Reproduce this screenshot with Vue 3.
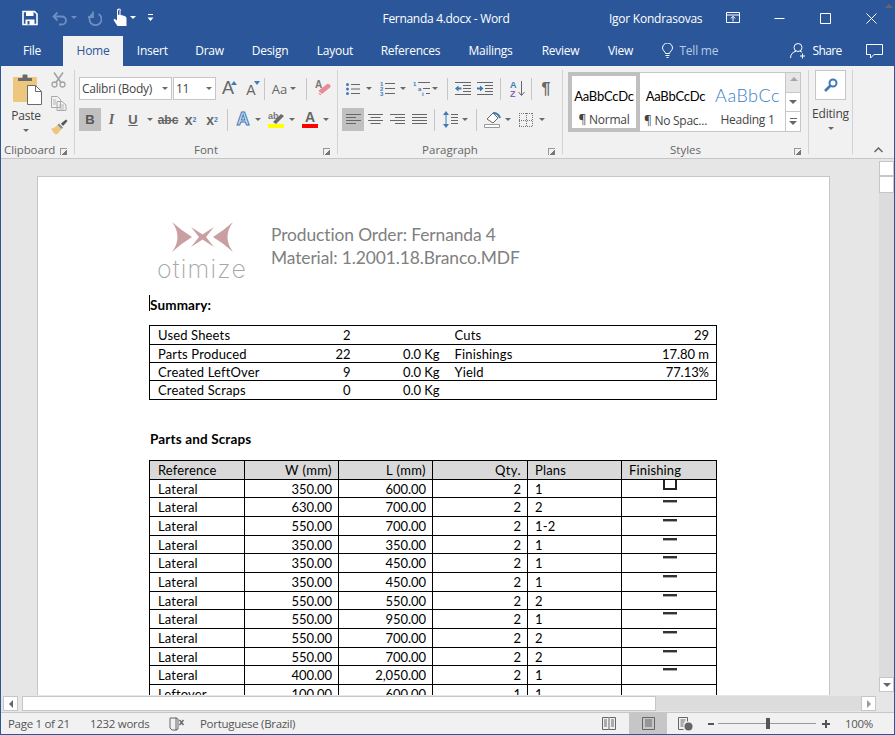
<script setup>
const tabs = [
  { t: 'File', w: 62 }, { t: 'Home', w: 60, active: true }, { t: 'Insert', w: 58.5 }, { t: 'Draw', w: 56 },
  { t: 'Design', w: 65 }, { t: 'Layout', w: 65 }, { t: 'References', w: 86 }, { t: 'Mailings', w: 74 },
  { t: 'Review', w: 66 }, { t: 'View', w: 54 }
]
const summary = [
  { a: 'Used Sheets', b: '2', c: '', d: 'Cuts', e: '29', h: 19 },
  { a: 'Parts Produced', b: '22', c: '0.0 Kg', d: 'Finishings', e: '17.80 m', h: 18 },
  { a: 'Created LeftOver', b: '9', c: '0.0 Kg', d: 'Yield', e: '77.13%', h: 18 },
  { a: 'Created Scraps', b: '0', c: '0.0 Kg', d: '', e: '', h: 19 }
]
const parts = [
  ['Lateral', '350.00', '600.00', '2', '1', 18, 'u'],
  ['Lateral', '630.00', '700.00', '2', '2', 19, 'l'],
  ['Lateral', '550.00', '700.00', '2', '1-2', 19, 'l'],
  ['Lateral', '350.00', '350.00', '2', '1', 18, 'l'],
  ['Lateral', '350.00', '450.00', '2', '1', 19, 'l'],
  ['Lateral', '350.00', '450.00', '2', '1', 19, 'l'],
  ['Lateral', '550.00', '550.00', '2', '2', 18, 'l'],
  ['Lateral', '550.00', '950.00', '2', '1', 19, 'l'],
  ['Lateral', '550.00', '700.00', '2', '2', 19, 'l'],
  ['Lateral', '550.00', '700.00', '2', '2', 18, 'l'],
  ['Lateral', '400.00', '2,050.00', '2', '1', 19, 'l'],
  ['Leftover', '100.00', '600.00', '1', '1', 19, '']
]
</script>

<template>
  <div class="win">
    <header class="titlebar">
      <div class="qat">
        <svg class="q-save" width="16" height="16" viewBox="0 0 16 16"><path d="M1 1.5h11.5l2.5 2.500v10.500h-14z" fill="none" stroke="#fff" stroke-width="1.600"/><path d="M4 1h7.500v5h-7.500zM3.500 9.500h9v5.500h-9z" fill="#fff"/><rect x="5.500" y="11" width="2" height="3.500" fill="#2b579a"/></svg>
        <svg class="q-undo" width="16" height="16" viewBox="0 0 16 16"><path d="M2 6.500h8a4 4 0 0 1 0 8h-3M5.500 2.500l-4 4 4 4" fill="none" stroke="#6d8ebf" stroke-width="1.800"/></svg>
        <i class="caret w11 dim"></i>
        <svg class="q-redo" width="16" height="16" viewBox="0 0 16 16"><path d="M5 3.500a6 6 0 1 0 6 0M5.500 1v5.500h-5" fill="none" stroke="#6d8ebf" stroke-width="1.800" transform="translate(1.500 .5)"/></svg>
        <svg class="q-touch" width="14" height="18" viewBox="0 0 14 18"><path d="M4 7V2.500a2 2 0 0 1 4 0V7l3.500 1c1.500.5 2 1.200 2 2.500V18H4.500L.5 12l1-1.200L4 12.500z" fill="#fff"/><path d="M5.500 6.800V2.800a.7.700 0 0 1 1.500 0v4M2 5.500A3.500 3.500 0 0 1 2 1.800" fill="none" stroke="#2b579a" stroke-width="1"/></svg>
        <i class="caret w11 white"></i>
        <svg class="q-cust" width="7" height="8" viewBox="0 0 7 8"><path d="M1 .5h5" stroke="#fff" stroke-width="1"/><path d="M.5 3.500h6L3.500 7z" fill="#fff"/></svg>
      </div>
      <div class="doctitle">Fernanda 4.docx - Word</div>
      <div class="user">Igor Kondrasovas</div>
      <svg class="w-opt" width="14" height="12" viewBox="0 0 14 12"><path d="M.5.500h13v10h-13zM.5 3h13M7 9.500v-5M4.800 6.500L7 4.300l2.200 2.200" fill="none" stroke="#fff"/></svg>
      <svg class="w-min" width="11" height="11" viewBox="0 0 11 11"><path d="M.5 5.500h10" stroke="#fff"/></svg>
      <svg class="w-max" width="11" height="11" viewBox="0 0 11 11"><path d="M.5.500h10v10H.5z" fill="none" stroke="#fff"/></svg>
      <svg class="w-close" width="11" height="11" viewBox="0 0 11 11"><path d="M.5.500l10 10M10.500.500l-10 10" stroke="#fff"/></svg>
    </header>

    <nav class="tabs">
      <span v-for="tab in tabs" :key="tab.t" class="tab" :class="{ on: tab.active }" :style="{ width: tab.w + 'px' }">{{ tab.t }}</span>
      <svg class="bulb" width="11" height="15" viewBox="0 0 11 15"><path d="M3.500 10.500C3.300 8.500.5 7.500.5 5a5 5 0 0 1 10 0c0 2.500-2.800 3.500-3 5.500zM3.500 12.500h4M4.500 14.500h2" fill="none" stroke="#fff"/></svg>
      <span class="tell">Tell me</span>
      <svg class="person" width="17" height="17" viewBox="0 0 17 17"><circle cx="8" cy="5.500" r="4" fill="none" stroke="#fff"/><path d="M.5 16c0-4 2.500-6 5.500-6.800M10 9.200c.8.200 1.500.5 2 1M12.500 11.500v5M10 14h5" fill="none" stroke="#fff"/></svg>
      <span class="share">Share</span>
      <svg class="comment" width="17" height="15" viewBox="0 0 17 15"><path d="M.5.500h16v10H8l-3.500 3.500v-3.500H.5z" fill="none" stroke="#fff"/></svg>
    </nav>

    <section class="ribbon">
      <div class="group g-clip">
        <div class="clip-body">
          <div class="paste">
            <svg width="29" height="31" viewBox="0 0 29 31"><rect x="0" y="3" width="24" height="25" rx="1" fill="#eec77f"/><path d="M5 7V4h4.500V1.500a1 1 0 0 1 1-1h3a1 1 0 0 1 1 1V4H19v3z" fill="#6a6a6a"/><path d="M14.500 11.500h8l6 6v13h-14z" fill="#fff" stroke="#6a6a6a"/><path d="M22.500 11.500v6h6" fill="none" stroke="#6a6a6a"/></svg>
            <span class="paste-l">Paste</span>
            <i class="caret w11"></i>
          </div>
          <div class="clip-small">
            <svg width="15" height="16" viewBox="0 0 15 16"><path d="M3 .5l7 10M12 .5l-7 10" stroke="#a3a3a3" stroke-width="1.600" fill="none"/><circle cx="3.500" cy="12.500" r="2.500" fill="none" stroke="#a3a3a3" stroke-width="1.300"/><circle cx="11.500" cy="12.500" r="2.500" fill="none" stroke="#a3a3a3" stroke-width="1.300"/></svg>
            <svg width="16" height="15" viewBox="0 0 16 15"><path d="M.5.500h6l3 3v8H.5z M6 5.500h5l4 3.500v5.500H6z" fill="#f1f1f1" stroke="#a9a9a9"/><path d="M2 4h3M2 6h3M2 8h3M8 9h5M8 11h5M8 13h5" stroke="#b8b8b8"/></svg>
            <svg width="17" height="16" viewBox="0 0 17 16"><path d="M0 9.500c3 0 5-2 6.500-3.500l4 4c-2 3-3.500 4.500-5 5.500C4 15.500 1.500 12.500 0 9.500z" fill="#eec77f"/><path d="M6.500 6l4 4 1.500-1.500-4-4z" fill="#8a8a8a"/><path d="M10 4.500L15 .5l1.500 1.500-4.500 5z" fill="#555"/></svg>
          </div>
        </div>
        <div class="glabel clip-l">Clipboard</div>
        <i class="launch"></i>
      </div>

      <div class="group g-font">
        <div class="row">
          <div class="combo cb-font"><span>Calibri (Body)</span><i class="caret w12"></i></div>
          <div class="combo cb-size"><span>11</span><i class="caret w12"></i></div>
          <span class="btn w22 ml1 glyph big">A<svg class="up" width="6" height="4" viewBox="0 0 6 4"><path d="M0 4l3-4 3 4z" fill="#3f7ab8"/></svg></span>
          <span class="btn w22 ml1 glyph mid">A<svg class="up" width="6" height="4" viewBox="0 0 6 4"><path d="M0 0l3 4 3-4z" fill="#3f7ab8"/></svg></span>
          <i class="sep ml2"></i>
          <span class="btn w21 ml4 glyph aa">Aa</span>
          <i class="caret w6"></i>
          <i class="sep ml10"></i>
          <span class="btn w22 ml5"><svg width="16" height="17" viewBox="0 0 16 17"><path d="M5 15.500L14.500 8c1.500-1.500 1.500-2 0-3.500-1-1-2-1-3 0L3 11z" fill="#ec8a94"/><path d="M3 11l5 4.500" stroke="#fff"/><text x="0" y="8" class="svgt">A</text></svg></span>
        </div>
        <div class="row r2">
          <span class="btn w22 on-b b">B</span>
          <span class="btn w21 glyph it">I</span>
          <span class="btn w22 glyph un">U</span>
          <i class="caret w12"></i>
          <span class="btn w24 glyph abc">abc</span>
          <span class="btn w21 glyph xs">x<sub>2</sub></span>
          <span class="btn w22 glyph xs">x<sup>2</sup></span>
          <i class="sep ml4"></i>
          <span class="btn w22 ml4 glyph te">A</span>
          <i class="caret w7"></i>
          <span class="btn w22 ml4"><svg width="17" height="19" viewBox="0 0 17 19"><text x="0" y="9" class="svgt small">ab</text><path d="M5 12L13 4l3 2-8 8z" fill="#6a6a6a"/><rect x="0" y="14" width="16" height="4" fill="#ffff00"/></svg></span>
          <i class="caret w10"></i>
          <span class="btn w22 ml2"><svg width="17" height="19" viewBox="0 0 17 19"><text x="3" y="12" class="svgt fc">A</text><rect x="0" y="14" width="16" height="4" fill="#f00"/></svg></span>
          <i class="caret w10"></i>
        </div>
        <div class="glabel">Font</div>
        <i class="launch"></i>
      </div>

      <div class="group g-para">
        <div class="row">
          <span class="btn w23 ml3"><svg width="14" height="14" viewBox="0 0 14 14"><circle cx="1.500" cy="2.500" r="1.500" fill="#3f7ab8"/><circle cx="1.500" cy="7" r="1.500" fill="#3f7ab8"/><circle cx="1.500" cy="11.500" r="1.500" fill="#3f7ab8"/><path d="M5 2.500h9M5 7h9M5 11.500h9" stroke="#666"/></svg></span>
          <i class="caret w10"></i>
          <span class="btn w22 ml2"><svg width="15" height="15" viewBox="0 0 15 15"><text x="0" y="5" class="svgt num">1</text><text x="0" y="10" class="svgt num">2</text><text x="0" y="15" class="svgt num">3</text><path d="M5 2.500h10M5 7.500h10M5 12.500h10" stroke="#666"/></svg></span>
          <i class="caret w10"></i>
          <span class="btn w20 ml3"><svg width="17" height="15" viewBox="0 0 17 15"><text x="0" y="5" class="svgt num">1</text><text x="5" y="10" class="svgt num">a</text><text x="9" y="15" class="svgt num">i</text><path d="M5 1.500h12M10 7.500h7M13 12.500h4" stroke="#666"/></svg></span>
          <i class="caret w8"></i>
          <i class="sep ml8"></i>
          <span class="btn w22 ml4"><svg width="16" height="13" viewBox="0 0 16 13"><path d="M0 .5h16M8 3.500h8M8 6.500h8M8 9.500h8M0 12.500h16" stroke="#666"/><path d="M6.500 5.500v2H3.500v2L0 6.500l3.500-3v2z" fill="#3f7ab8"/></svg></span>
          <span class="btn w22"><svg width="16" height="13" viewBox="0 0 16 13"><path d="M0 .5h16M8 3.500h8M8 6.500h8M8 9.500h8M0 12.500h16" stroke="#666"/><path d="M0 5.500v2h3v2l3.500-3-3.500-3v2z" fill="#3f7ab8"/></svg></span>
          <i class="sep ml4"></i>
          <span class="btn w22 ml5"><svg width="15" height="18" viewBox="0 0 15 18"><text x="0" y="8" class="svgt az b1">A</text><text x="0" y="17" class="svgt az p1">Z</text><path d="M11.500 1v14M8.500 12l3 3.500 3-3.500" fill="none" stroke="#666"/></svg></span>
          <i class="sep ml3"></i>
          <span class="btn w22 ml3 glyph pil">¶</span>
        </div>
        <div class="row r2">
          <span class="btn w22 ml4 on-b"><svg width="15" height="11" viewBox="0 0 15 11"><path d="M0 .5h15M0 3.500h10M0 6.500h15M0 9.500h10" stroke="#666"/></svg></span>
          <span class="btn w22"><svg width="15" height="11" viewBox="0 0 15 11"><path d="M0 .5h15M2.500 3.500h10M0 6.500h15M2.500 9.500h10" stroke="#666"/></svg></span>
          <span class="btn w22"><svg width="15" height="11" viewBox="0 0 15 11"><path d="M0 .5h15M5 3.500h10M0 6.500h15M5 9.500h10" stroke="#666"/></svg></span>
          <span class="btn w22"><svg width="15" height="11" viewBox="0 0 15 11"><path d="M0 .5h15M0 3.500h15M0 6.500h15M0 9.500h15" stroke="#666"/></svg></span>
          <i class="sep ml4"></i>
          <span class="btn w22 ml4"><svg width="15" height="17" viewBox="0 0 15 17"><path d="M3 2v13" stroke="#3f7ab8"/><path d="M0 4l3-4 3 4zM0 13l3 4 3-4z" fill="#3f7ab8"/><path d="M8 3.500h7M8 6.500h7M8 9.500h7M8 12.500h7" stroke="#666"/></svg></span>
          <i class="caret w7"></i>
          <i class="sep ml8"></i>
          <span class="btn w22 ml4"><svg width="17" height="17" viewBox="0 0 17 17"><path d="M3 8l6-6 5 5-5 5z" fill="#fff" stroke="#666"/><path d="M9 2c3 0 6 1.500 7 5" fill="none" stroke="#3f7ab8" stroke-width="2"/><path d="M.5 13.500h15v3H.5z" fill="#fff" stroke="#999"/></svg></span>
          <i class="caret w10"></i>
          <span class="btn w22 ml2"><svg width="14" height="14" viewBox="0 0 14 14"><path d="M.5 0v14M13.500 0v14M0 .5h14M0 13.500h14M7.500 0v14M0 7.500h14" fill="none" stroke="#777" stroke-dasharray="1 1"/></svg></span>
          <i class="caret w10"></i>
        </div>
        <div class="glabel">Paragraph</div>
        <i class="launch"></i>
      </div>

      <div class="group g-styles">
        <div class="gallery">
          <div class="style sel"><div class="sample">AaBbCcDc</div><div class="sname">¶ Normal</div></div>
          <div class="style sp"><div class="sample">AaBbCcDc</div><div class="sname">¶ No Spac...</div></div>
          <div class="style hd"><div class="sample">AaBbCc</div><div class="sname">Heading 1</div></div>
          <div class="gscroll">
            <span class="gb dis"><i class="tri up"></i></span>
            <span class="gb"><i class="tri"></i></span>
            <span class="gb more"><i class="barline"></i><i class="tri"></i></span>
          </div>
        </div>
        <div class="glabel">Styles</div>
        <i class="launch"></i>
      </div>

      <div class="group g-edit">
        <span class="ebtn"><svg width="14" height="14" viewBox="0 0 14 14"><circle cx="9" cy="5" r="3.500" fill="none" stroke="#3f7ab8" stroke-width="2"/><path d="M6.500 7.500L1 13" stroke="#3f7ab8" stroke-width="2.600"/></svg></span>
        <span class="elabel">Editing</span>
        <i class="caret w11"></i>
      </div>

      <svg class="collapse" width="9" height="6" viewBox="0 0 9 6"><path d="M.5 5L4.500 1l4 4" fill="none" stroke="#666" stroke-width="1.500"/></svg>
    </section>

    <main class="docarea">
      <div class="canvas">
        <article class="page">
          <div class="head">
            <div class="logo">
              <svg width="61" height="32" viewBox="0 0 61 32"><path d="M0 1Q10 10 20 16Q10 22 0 31Q11 16 0 1z" fill="#c99fa2"/><path d="M19 6L30.500 13.500L42 6L34 16L42 26L30.500 18.500L19 26L27 16z" fill="#c99fa2"/><path d="M61 1Q51 10 41 16Q51 22 61 31Q50 16 61 1z" fill="#c99fa2"/></svg>
              <span class="otimize">otimize</span>
            </div>
            <div class="heading"><div>Production Order: Fernanda 4</div><div>Material: 1.2001.18.Branco.MDF</div></div>
          </div>
          <div class="summary-t"><i class="cursor"></i>Summary:</div>
          <table class="grid sum">
            <colgroup><col class="c1"><col class="c2"><col class="c3"><col class="c4"><col class="c5"></colgroup>
            <tr v-for="r in summary" :key="r.a" :style="{ height: r.h + 'px' }">
              <td class="l">{{ r.a }}</td><td class="r">{{ r.b }}</td><td class="r">{{ r.c }}</td><td class="l c4t">{{ r.d }}</td><td class="r">{{ r.e }}</td>
            </tr>
          </table>
          <div class="parts-t">Parts and Scraps</div>
          <table class="grid parts">
            <colgroup><col class="p1"><col class="p2"><col class="p2"><col class="p3"><col class="p2"><col class="p3"></colgroup>
            <tr class="th"><td class="l">Reference</td><td class="r">W (mm)</td><td class="r">L (mm)</td><td class="r">Qty.</td><td class="l pl7">Plans</td><td class="l pl7">Finishing</td></tr>
            <tr v-for="(r, i) in parts" :key="i" :style="{ height: r[5] + 'px' }">
              <td class="l">{{ r[0] }}</td><td class="r">{{ r[1] }}</td><td class="r">{{ r[2] }}</td><td class="r">{{ r[3] }}</td><td class="l pl7">{{ r[4] }}</td>
              <td class="fin"><i v-if="r[6] === 'u'" class="chk-u"></i><i v-else-if="r[6] === 'l'" class="chk-l"></i></td>
            </tr>
          </table>
        </article>
      </div>
      <aside class="vscroll">
        <span class="sb"><i class="tri up"></i></span>
        <span class="vthumb"></span>
        <span class="vfill"></span>
        <span class="sb"><i class="tri"></i></span>
      </aside>
    </main>

    <div class="hscroll">
      <span class="sb hb"><i class="tri left"></i></span>
      <div class="htrack"><span class="hthumb"></span></div>
      <span class="sb hb"><i class="tri right"></i></span>
    </div>

    <footer class="status">
      <span class="s-page">Page 1 of 21</span>
      <span class="s-words">1232 words</span>
      <svg class="s-proof" width="16" height="14" viewBox="0 0 16 14"><path d="M7 1H1v10l2 2h4M7 .5v13M7 1l2 1v10l-2 1" fill="none" stroke="#666"/><path d="M10.500 3l4 5M14.500 3l-4 5" stroke="#666" stroke-width="1.400"/></svg>
      <span class="s-lang">Portuguese (Brazil)</span>
      <svg class="v-read" width="14" height="14" viewBox="0 0 14 14"><path d="M.5.500h6l.5.5.5-.5h6v12h-6l-.5.5-.5-.5h-6zM7 1v12M2 3h3M2 5h3M2 7h3M2 9h3M9 3h3M9 5h3M9 7h3M9 9h3" fill="none" stroke="#666"/></svg>
      <span class="v-print"><svg width="13" height="13" viewBox="0 0 13 13"><path d="M.5.500h12v12H.5zM3 3h7M3 5h7M3 7h7M3 9h7" fill="none" stroke="#666"/></svg></span>
      <svg class="v-web" width="15" height="14" viewBox="0 0 15 14"><path d="M.5.500h9v4M.5.500v12h5M2.500 3h5M2.500 5h4M2.500 7h3M2.500 9h3" fill="none" stroke="#666"/><circle cx="10.500" cy="9.500" r="4" fill="#666"/></svg>
      <i class="z-minus"></i>
      <div class="slider"><i class="z-thumb"></i></div>
      <i class="z-plus"></i>
      <span class="s-zoom">100%</span>
    </footer>
  </div>
</template>

<style>
html, body { margin: 0; padding: 0; background: #f1f1f1; }
</style>

<style scoped>
.win { width: 895px; height: 735px; box-sizing: border-box; border: 1px solid #2b579a; border-top: 0; display: flex; flex-direction: column; overflow: hidden; font-family: "Open Sans", "Noto Sans", sans-serif; font-size: 12px; color: #444; background: #e6e6e6; }
i { display: block; font-style: normal; }
.titlebar { height: 36px; flex: none; background: #2b579a; color: #fff; display: flex; align-items: center; }
.qat { width: 345px; display: flex; align-items: center; flex: none; }
.q-save { margin-left: 21px; }
.q-undo { margin-left: 14px; }
.q-redo { margin-left: 7px; }
.q-touch { margin-left: 11px; margin-top: -2px; }
.q-cust { margin-left: 9px; }
.doctitle { width: 200px; text-align: center; flex: none; letter-spacing: -.3px; }
.user { margin-left: 63px; letter-spacing: -.25px; width: 91px; white-space: nowrap; }
.w-opt { margin-left: 26px; }
.w-min { margin-left: 34px; }
.w-max { margin-left: 35px; }
.w-close { margin-left: 35px; }
.caret { position: relative; height: 10px; flex: none; }
.caret::after { content: ""; position: absolute; left: 50%; top: 50%; margin: -2px 0 0 -3px; border-style: solid; border-width: 3px 3px 0; border-color: #6a6a6a transparent transparent; }
.caret.dim::after { border-top-color: #6d8ebf; }
.caret.white::after { border-top-color: #fff; }
.w6 { width: 6px; } .w7 { width: 7px; } .w8 { width: 8px; } .w10 { width: 10px; } .w11 { width: 11px; } .w12 { width: 12px; }
.w20 { width: 20px; } .w21 { width: 21px; } .w22 { width: 22px; } .w23 { width: 23px; } .w24 { width: 24px; }
.ml1 { margin-left: 1px; } .ml2 { margin-left: 2px; } .ml3 { margin-left: 3px; } .ml4 { margin-left: 4px; } .ml5 { margin-left: 5px; } .ml8 { margin-left: 8px; } .ml10 { margin-left: 10px; }

.tabs { height: 30px; flex: none; background: #2b579a; display: flex; color: #fff; letter-spacing: -.25px; align-items: stretch; }
.tab { display: flex; align-items: center; justify-content: center; flex: none; height: 30px; padding-bottom: 1px; box-sizing: border-box; }
.tab.on { background: #f1f1f1; color: #2b579a; }
.bulb { margin: 7px 0 0 14px; flex: none; }
.tell { margin: 0 0 0 7px; color: #b9cbe5; line-height: 30px; width: 39px; white-space: nowrap; }
.person { margin: 6px 0 0 71px; flex: none; }
.share { margin-left: 6px; line-height: 30px; width: 30px; letter-spacing: -.6px; }
.comment { margin: 8px 0 0 23px; flex: none; }

.ribbon { height: 92px; flex: none; background: #f1f1f1; border-bottom: 1px solid #c6c6c6; box-sizing: content-box; display: flex; position: relative; }
.group { position: relative; height: 84px; margin-top: 4px; border-right: 1px solid #d2d2d2; box-sizing: content-box; flex: none; display: flex; flex-direction: column; }
.g-clip { width: 73px; } .g-font { width: 262px; } .g-para { width: 224px; } .g-styles { width: 245px; } .g-edit { width: 43px; align-items: center; }
.g-font .row { margin-left: 4px; }
.row { display: flex; align-items: center; height: 23px; margin-top: 7px; }
.row.r2 { margin-top: 8px; }
.glabel { position: absolute; left: 0; right: 0; bottom: -4px; height: 16px; line-height: 16px; text-align: center; font-size: 11.5px; color: #666; }
.clip-l { text-align: left; padding-left: 3px; letter-spacing: -.1px; }
.launch { position: absolute; right: 7px; bottom: -1px; width: 7px; height: 7px; border-left: 1px solid #999; border-top: 1px solid #999; box-sizing: border-box; background: linear-gradient(135deg, transparent 55%, #777 55%); }
.clip-body { display: flex; }
.paste { width: 50px; display: flex; flex-direction: column; align-items: center; padding-top: 4px; box-sizing: border-box; }
.paste svg { margin-left: 3px; }
.paste-l { margin-top: 3px; line-height: 16px; color: #444; letter-spacing: -.2px; }
.paste .caret { margin-top: 2px; }
.clip-small { display: flex; flex-direction: column; gap: 8px; align-items: flex-start; padding-top: 2px; }
.combo { height: 23px; box-sizing: border-box; border: 1px solid #c6c6c6; background: #fff; display: flex; align-items: center; justify-content: space-between; flex: none; padding-left: 2px; font-size: 12px; letter-spacing: -.3px; }
.cb-font { width: 93px; } .cb-size { width: 43px; margin-left: 1px; }
.btn { height: 23px; flex: none; display: flex; align-items: center; justify-content: center; position: relative; }
.on-b { background: #c0c0c0; }
.b { font-weight: 700; font-size: 13px; color: #555; font-family: "Liberation Sans", sans-serif; }
.glyph { font-family: "Liberation Sans", sans-serif; color: #666; }
.big { font-size: 18px; } .mid { font-size: 14px; padding-top: 2px; box-sizing: border-box; }
.up { position: absolute; right: 2px; top: 4px; }
.aa { font-size: 13px; font-family: "Open Sans", sans-serif; }
.it { font-style: italic; font-family: "Liberation Serif", serif; font-size: 14px; font-weight: 700; }
.un { text-decoration: underline; font-weight: 700; font-size: 13px; }
.abc { text-decoration: line-through; font-size: 12px; font-weight: 700; }
.xs { font-weight: 700; font-size: 14px; }
.xs sub, .xs sup { font-size: 7px; color: #3f7ab8; }
.te { font-size: 18px; font-weight: 700; color: #d6e4f3; -webkit-text-stroke: 1px #3f7ab8; }
.pil { font-size: 16px; font-weight: 700; }
.sep { width: 1px; height: 22px; background: #c6c6c6; flex: none; }
.svgt { font: 700 10px "Liberation Sans", sans-serif; fill: #777; }
.svgt.small { font-size: 9px; }
.svgt.fc { font-size: 14px; fill: #666; }
.svgt.num { font-size: 6px; fill: #3f7ab8; }
.svgt.az { font-size: 9px; }
.svgt.b1 { fill: #3f7ab8; } .svgt.p1 { fill: #8e63b5; }

.gallery { display: flex; margin: 2px 0 0 5px; width: 233px; height: 60px; box-sizing: border-box; border: 1px solid #c6c6c6; background: #fff; }
.style { display: flex; flex-direction: column; align-items: center; flex: none; box-sizing: border-box; }
.sel { width: 72px; margin: -1px 0 -1px -1px; border: 4px solid #c0c0c0; }
.sp { width: 71px; } .hd { width: 73px; }
.sample { height: 30px; line-height: 30px; white-space: nowrap; font-family: Lato, sans-serif; font-size: 13px; color: #000; margin-top: 8px; letter-spacing: -.2px; }
.sel .sample { margin-top: 5px; height: 29px; }
.hd .sample { color: #3a80c8; font-size: 18px; font-weight: 300; margin-top: 7px; letter-spacing: .5px; }
.sname { line-height: 16px; white-space: nowrap; margin-top: 2px; font-size: 12px; letter-spacing: -.25px; }
.sel .sname { margin-top: 2px; }
.gscroll { display: flex; flex-direction: column; flex: 1; border-left: 1px solid #c6c6c6; margin-left: 1px; }
.gb { flex: 1; position: relative; display: flex; align-items: center; justify-content: center; border-bottom: 1px solid #c6c6c6; flex-direction: column; gap: 2px; }
.gb:last-child { border-bottom: 0; }
.gb.dis { background: #e6e6e6; }
.dis .tri { opacity: .5; }
.tri { width: 0; height: 0; border-style: solid; border-width: 4px 4px 0; border-color: #666 transparent transparent; }
.tri.up { border-width: 0 4px 4px; border-color: transparent transparent #666; }
.tri.left { border-width: 4px 4px 4px 0; border-color: transparent #666 transparent transparent; }
.tri.right { border-width: 4px 0 4px 4px; border-color: transparent transparent transparent #999; }
.barline { width: 7px; height: 1px; background: #666; }
.ebtn { width: 31px; height: 30px; margin-top: 0; box-sizing: border-box; border: 1px solid #c6c6c6; background: #fff; display: flex; align-items: center; justify-content: center; }
.elabel { margin-top: 4px; line-height: 20px; letter-spacing: -.2px; }
.g-edit .caret { margin-top: 0; }
.collapse { position: absolute; right: 11px; bottom: 5px; }

.docarea { flex: 1; min-height: 0; display: flex; background: #e6e6e6; padding-right: 1px; }
.canvas { width: 878px; overflow: hidden; flex: none; padding: 17px 0 0 36px; box-sizing: border-box; }
.page { width: 793px; height: 900px; box-sizing: border-box; background: #fff; border: 1px solid #c6c6c6; padding: 0 0 0 111px; font-family: Lato, sans-serif; font-size: 13px; color: #000; }
.head { display: flex; height: 108px; box-sizing: border-box; padding-top: 45px; }
.logo { width: 121px; flex: none; display: flex; flex-direction: column; align-items: flex-start; margin-top: -1px; }
.logo svg { margin-left: 23px; flex: none; }
.otimize { font-family: Inter, Lato, sans-serif; font-weight: 200; font-size: 25px; letter-spacing: 1.2px; color: #a8a8a8; line-height: 24px; margin: 4px 0 0 8px; white-space: nowrap; }
.heading { font-size: 17.4px; line-height: 23px; color: #808080; letter-spacing: -.1px; margin-top: 1px; padding-left: 1px; white-space: nowrap; }
.summary-t { position: relative; font-weight: 700; font-size: 13.5px; height: 40px; line-height: 18px; padding: 11px 0 0 1px; box-sizing: border-box; letter-spacing: .15px; color: #000; }
.cursor { position: absolute; left: 0; top: 10px; width: 1px; height: 16px; background: #000; }
.grid { border-collapse: collapse; table-layout: fixed; width: 567px; }
.grid td { border: 1px solid #000; padding: 0; line-height: 16px; white-space: nowrap; overflow: visible; }
.sum td { border-left: 0; border-right: 0; }
.sum { border-left: 1px solid #000; border-right: 1px solid #000; }
.grid .l { padding-left: 8px; text-align: left; letter-spacing: .15px; }
.grid .pl7 { padding-left: 7px; }
.grid .r { padding-right: 6px; text-align: right; letter-spacing: -.05px; }
.c1 { width: 130px; } .c2 { width: 77px; } .c3 { width: 89px; } .c4 { width: 165px; } .c5 { width: 106px; }
.sum .c4t { padding-left: 9px; }
.sum td:last-child { padding-right: 7px; }
.p1 { width: 95px; } .p2 { width: 94px; } .p3 { width: 95px; }
.parts-t { font-weight: 700; font-size: 13.5px; height: 60px; padding: 30px 0 0 1px; box-sizing: border-box; line-height: 18px; letter-spacing: .15px; color: #000; }
.th { height: 19px; background: #d9d9d9; }
.th .r { letter-spacing: .4px; }
.fin { position: relative; vertical-align: top; }
.chk-u { position: absolute; left: 41px; top: 0; width: 14px; height: 10px; box-sizing: border-box; border: 2px solid #222; border-top: 0; }
.chk-l { position: absolute; left: 41px; top: 2px; width: 14px; height: 2px; background: #333; border-bottom: 1px solid #aaa; }

.vscroll { width: 15px; flex: none; display: flex; flex-direction: column; margin: 2px 0 3px; background: #dcdcdc; }
.sb { width: 15px; height: 15px; flex: none; box-sizing: border-box; background: #fff; border: 1px solid #c6c6c6; display: flex; align-items: center; justify-content: center; }
.vthumb { height: 17px; flex: none; background: #fff; border: 1px solid #c6c6c6; box-sizing: border-box; }
.vfill { flex: 1; }
.hscroll { height: 17px; flex: none; display: flex; align-items: center; padding: 0 0 0 2px; background: #e6e6e6; }
.hb { height: 15px; }
.htrack { width: 839px; height: 15px; margin: 0 0 0 4px; background: #dcdcdc; display: flex; }
.hthumb { width: 634px; background: #fff; border: 1px solid #c6c6c6; box-sizing: border-box; }
.status { height: 22px; flex: none; background: #f1f1f1; border-top: 1px solid #c6c6c6; box-sizing: border-box; display: flex; align-items: center; font-size: 11.5px; color: #555; white-space: nowrap; letter-spacing: -.3px; }
.s-page { margin-left: 7px; width: 62px; }
.s-words { margin-left: 20px; width: 60px; }
.s-proof { margin-left: 19px; flex: none; }
.s-lang { margin-left: 15px; width: 96px; }
.v-read { margin-left: 306px; flex: none; }
.v-print { margin-left: 13px; width: 38px; height: 21px; background: #c6c6c6; display: flex; align-items: center; justify-content: center; flex: none; }
.v-web { margin-left: 11px; flex: none; }
.z-minus { margin-left: 15px; width: 6px; height: 2px; background: #555; flex: none; }
.slider { margin-left: 4px; width: 98px; height: 1px; background: #999; position: relative; flex: none; }
.z-thumb { position: absolute; left: 48px; top: -5px; width: 4px; height: 11px; background: #555; }
.z-plus { margin-left: 6px; width: 8px; height: 8px; flex: none; background: linear-gradient(#555,#555) center/8px 2px no-repeat, linear-gradient(#555,#555) center/2px 8px no-repeat; }
.s-zoom { margin-left: 15px; width: 30px; }
</style>
